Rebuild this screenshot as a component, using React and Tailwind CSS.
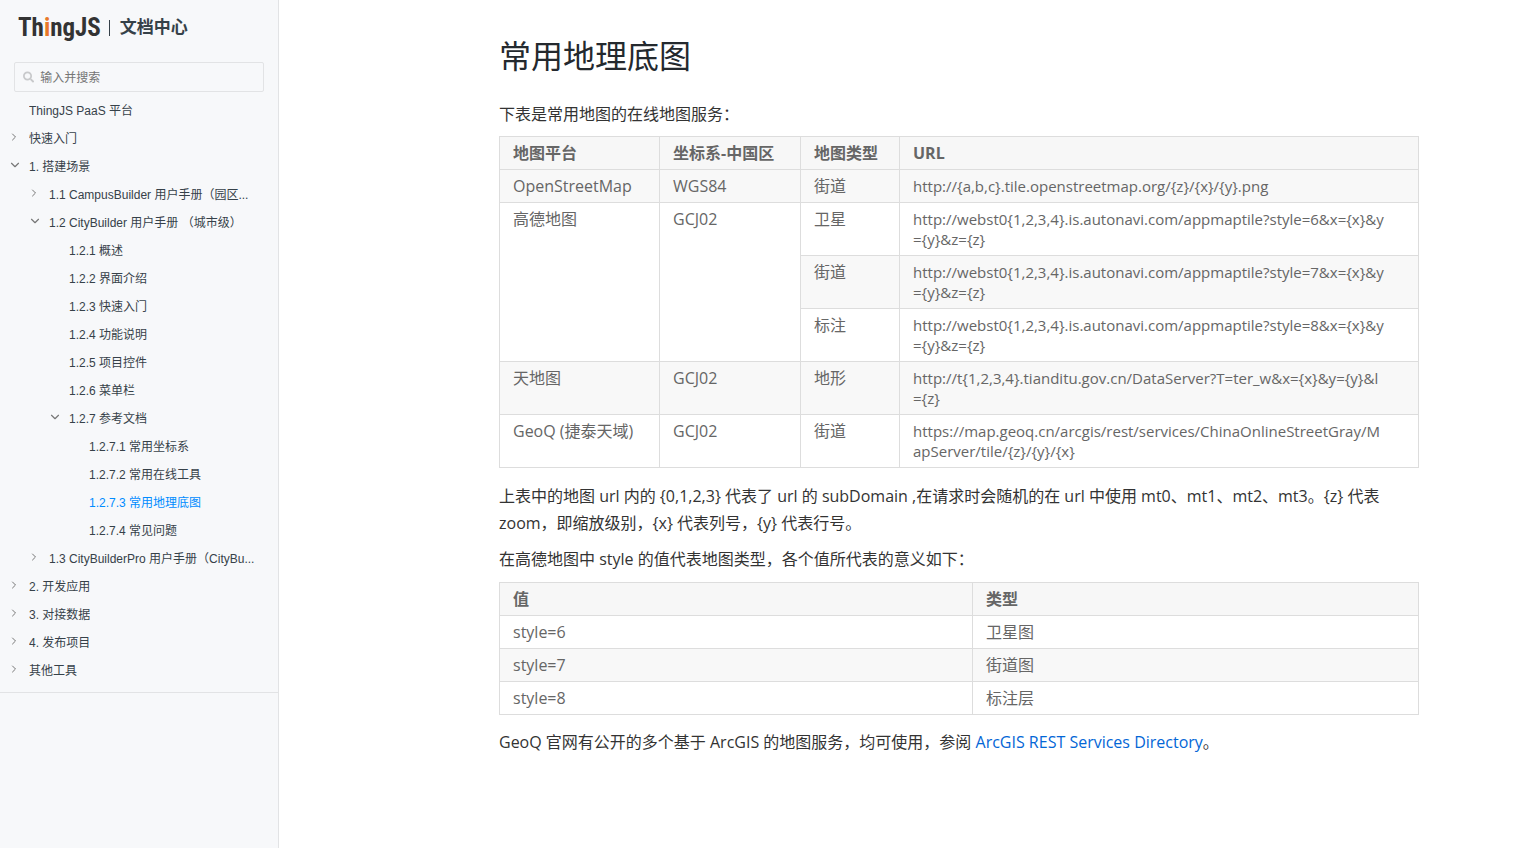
import { ChevronDown, ChevronRight } from "lucide-react";
import { FaSearch } from "react-icons/fa";

// sidebar tree, level is the indent depth
const navItems = [
    { label: "ThingJS PaaS 平台", level: 0 },
    { label: "快速入门", level: 0, state: "closed" },
    { label: "1. 搭建场景", level: 0, state: "open" },
    { label: "1.1 CampusBuilder 用户手册（园区...", level: 1, state: "closed" },
    { label: "1.2 CityBuilder 用户手册 （城市级）", level: 1, state: "open" },
    { label: "1.2.1 概述", level: 2 },
    { label: "1.2.2 界面介绍", level: 2 },
    { label: "1.2.3 快速入门", level: 2 },
    { label: "1.2.4 功能说明", level: 2 },
    { label: "1.2.5 项目控件", level: 2 },
    { label: "1.2.6 菜单栏", level: 2 },
    { label: "1.2.7 参考文档", level: 2, state: "open" },
    { label: "1.2.7.1 常用坐标系", level: 3 },
    { label: "1.2.7.2 常用在线工具", level: 3 },
    { label: "1.2.7.3 常用地理底图", level: 3, active: true },
    { label: "1.2.7.4 常见问题", level: 3 },
    { label: "1.3 CityBuilderPro 用户手册（CityBu...", level: 1, state: "closed" },
    { label: "2. 开发应用", level: 0, state: "closed" },
    { label: "3. 对接数据", level: 0, state: "closed" },
    { label: "4. 发布项目", level: 0, state: "closed" },
    { label: "其他工具", level: 0, state: "closed" },
];

const indents = ["pl-2", "pl-7", "pl-12", "pl-[68px]"];

const styleRows = [
    ["style=6", "卫星图"],
    ["style=7", "街道图"],
    ["style=8", "标注层"],
];

const cell = "border border-[#dddddd] px-[13px] py-1.5 text-left align-top break-all";
// long urls carry their own line break
const urlCell = `${cell} text-[15px] whitespace-pre-line`;
const tableClass = "w-full table-fixed border-collapse text-base leading-5 text-[#666666]";

function NavItem({ item }) {
    return (
        <li className={`flex h-7 items-center pr-3 ${indents[item.level]}`}>
            {/* fixed slot keeps the labels aligned when there is no arrow */}
            <span className="flex w-[21px] shrink-0 pb-1">
                {item.state && (
                    <button aria-label={item.label} className="cursor-pointer text-[#777777]">
                        {item.state === "open" ? <ChevronDown size={14} strokeWidth={2} /> : <ChevronRight size={12} strokeWidth={2} />}
                    </button>
                )}
            </span>
            <a href="#" className={`truncate ${item.active ? "text-[#008cff]" : "text-[#364149]"}`}>
                {item.label}
            </a>
        </li>
    );
}

function Sidebar() {
    return (
        <aside className="w-[279px] shrink-0 border-r border-[#e2e3e5] bg-[#f7f8fa] font-['Liberation_Sans','Noto_Sans_CJK_SC',sans-serif] text-xs">
            <div className="flex h-[62px] items-center pb-1.5 pl-[18px]">
                <a href="#" className="font-['Roboto_Condensed','Open_Sans_Condensed','Noto_Sans_Condensed','Roboto',sans-serif] text-[25px] font-bold text-[#333333]">
                    Th<span className="text-[#e8782a]">i</span>ngJS
                </a>
                <span className="ml-2 h-4 w-px bg-[#364149]" />
                <span className="ml-2.5 text-[17px] font-bold text-[#364149]">文档中心</span>
            </div>
            <label className="mr-3.5 ml-3.5 flex h-[30px] items-center gap-1.5 rounded-xs border border-[#e2e3e5] pl-2">
                <FaSearch size={12} className="text-[#c8c9cb]" />
                <input type="text" aria-label="搜索" placeholder="输入并搜索" className="w-full bg-transparent pt-0.5 outline-none placeholder:text-[#757575]" />
            </label>
            <nav className="border-b border-[#e2e3e5] pt-[5px] pb-[7px]">
                <ul>
                    {navItems.map((item) => <NavItem key={item.label} item={item} />)}
                </ul>
            </nav>
        </aside>
    );
}

function MapTable() {
    return (
        <table className={tableClass}>
            <colgroup>
                <col className="w-[160px]" />
                <col className="w-[141px]" />
                <col className="w-[99px]" />
                <col />
            </colgroup>
            <thead>
                <tr className="bg-[#f7f7f7]">
                    <th className={cell}>地图平台</th>
                    <th className={cell}>坐标系-中国区</th>
                    <th className={cell}>地图类型</th>
                    <th className={cell}>URL</th>
                </tr>
            </thead>
            <tbody>
                <tr className="bg-[#f8f8f8]">
                    <td className={cell}>OpenStreetMap</td>
                    <td className={cell}>WGS84</td>
                    <td className={cell}>街道</td>
                    <td className={urlCell}>{"http://{a,b,c}.tile.openstreetmap.org/{z}/{x}/{y}.png"}</td>
                </tr>
                <tr>
                    <td className={cell} rowSpan={3}>高德地图</td>
                    <td className={cell} rowSpan={3}>GCJ02</td>
                    <td className={cell}>卫星</td>
                    <td className={urlCell}>{"http://webst0{1,2,3,4}.is.autonavi.com/appmaptile?style=6&x={x}&y\n={y}&z={z}"}</td>
                </tr>
                <tr className="bg-[#f8f8f8]">
                    <td className={cell}>街道</td>
                    <td className={urlCell}>{"http://webst0{1,2,3,4}.is.autonavi.com/appmaptile?style=7&x={x}&y\n={y}&z={z}"}</td>
                </tr>
                <tr>
                    <td className={cell}>标注</td>
                    <td className={urlCell}>{"http://webst0{1,2,3,4}.is.autonavi.com/appmaptile?style=8&x={x}&y\n={y}&z={z}"}</td>
                </tr>
                <tr className="bg-[#f8f8f8]">
                    <td className={cell}>天地图</td>
                    <td className={cell}>GCJ02</td>
                    <td className={cell}>地形</td>
                    <td className={urlCell}>{"http://t{1,2,3,4}.tianditu.gov.cn/DataServer?T=ter_w&x={x}&y={y}&l\n={z}"}</td>
                </tr>
                <tr>
                    <td className={cell}>GeoQ (捷泰天域)</td>
                    <td className={cell}>GCJ02</td>
                    <td className={cell}>街道</td>
                    <td className={urlCell}>{"https://map.geoq.cn/arcgis/rest/services/ChinaOnlineStreetGray/M\napServer/tile/{z}/{y}/{x}"}</td>
                </tr>
            </tbody>
        </table>
    );
}

function StyleTable() {
    return (
        <table className={tableClass}>
            <colgroup>
                <col className="w-[473px]" />
                <col />
            </colgroup>
            <thead>
                <tr className="bg-[#f7f7f7]">
                    <th className={cell}>值</th>
                    <th className={cell}>类型</th>
                </tr>
            </thead>
            <tbody>
                {styleRows.map(([value, type]) => (
                    <tr key={value} className="even:bg-[#f8f8f8]">
                        <td className={cell}>{value}</td>
                        <td className={cell}>{type}</td>
                    </tr>
                ))}
            </tbody>
        </table>
    );
}

export default function App() {
    return (
        <div className="flex min-h-screen bg-white">
            <Sidebar />
            <main className="min-w-0 flex-1 pt-8 pr-[94px] pb-10 pl-[220px] font-['Open_Sans','Noto_Sans_CJK_SC',sans-serif] text-base leading-[27px] text-[#333333]">
                <h1 className="mb-[21px] text-[32px] leading-[48px] text-[#24292e]">常用地理底图</h1>
                <p className="mb-2">下表是常用地图的在线地图服务：</p>
                <MapTable />
                <p className="mt-[15px] mb-[9px]">
                    {"上表中的地图 url 内的 {0,1,2,3} 代表了 url 的 subDomain ,在请求时会随机的在 url 中使用 mt0、mt1、mt2、mt3。{z} 代表 zoom，即缩放级别，{x} 代表列号，{y} 代表行号。"}
                </p>
                <p className="mb-[9px]">在高德地图中 style 的值代表地图类型，各个值所代表的意义如下：</p>
                <StyleTable />
                <p className="mt-3.5">
                    GeoQ 官网有公开的多个基于 ArcGIS 的地图服务，均可使用，参阅{" "}
                    <a href="#" className="text-[#0366d6]">ArcGIS REST Services Directory</a>。
                </p>
            </main>
        </div>
    );
}
